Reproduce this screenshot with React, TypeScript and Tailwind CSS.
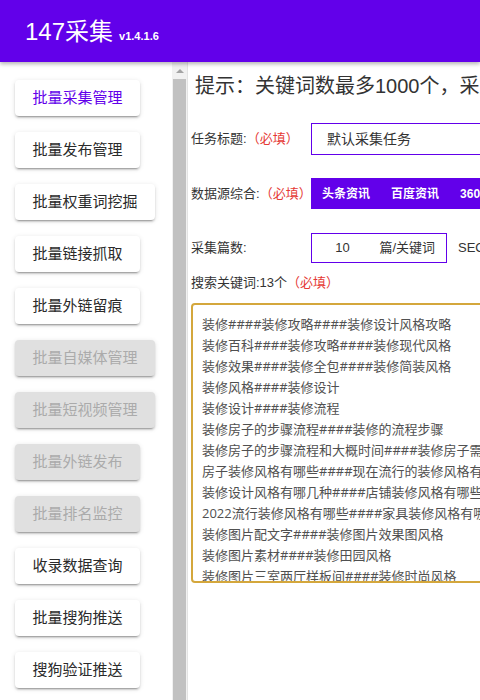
import React from "react";

const FONT = "font-['Liberation_Sans','Noto_Sans_CJK_SC',sans-serif]";

const RAISED =
  "shadow-[0_3px_1px_-2px_rgba(0,0,0,0.2),0_2px_2px_0_rgba(0,0,0,0.14),0_1px_5px_0_rgba(0,0,0,0.12)]";

interface NavItem {
  label: string;
  state: "active" | "normal" | "disabled";
}

const navItems: NavItem[] = [
  { label: "批量采集管理", state: "active" },
  { label: "批量发布管理", state: "normal" },
  { label: "批量权重词挖掘", state: "normal" },
  { label: "批量链接抓取", state: "normal" },
  { label: "批量外链留痕", state: "normal" },
  { label: "批量自媒体管理", state: "disabled" },
  { label: "批量短视频管理", state: "disabled" },
  { label: "批量外链发布", state: "disabled" },
  { label: "批量排名监控", state: "disabled" },
  { label: "收录数据查询", state: "normal" },
  { label: "批量搜狗推送", state: "normal" },
  { label: "搜狗验证推送", state: "normal" },
];

const keywords = [
  "装修####装修攻略####装修设计风格攻略",
  "装修百科####装修攻略####装修现代风格",
  "装修效果####装修全包####装修简装风格",
  "装修风格####装修设计",
  "装修设计####装修流程",
  "装修房子的步骤流程####装修的流程步骤",
  "装修房子的步骤流程和大概时间####装修房子需要注意什么",
  "房子装修风格有哪些####现在流行的装修风格有哪些",
  "装修设计风格有哪几种####店铺装修风格有哪些",
  "2022流行装修风格有哪些####家具装修风格有哪些",
  "装修图片配文字####装修图片效果图风格",
  "装修图片素材####装修田园风格",
  "装修图片三室两厅样板间####装修时尚风格",
];

const NavButton: React.FC<{ item: NavItem }> = ({ item }) => {
  const tone =
    item.state === "active"
      ? "bg-white text-[#6200ea]"
      : item.state === "disabled"
      ? "bg-[#e0e0e0] text-[#ababab]"
      : "bg-white text-[#2a2a2a]";
  return (
    <div
      className={`self-start h-[36px] px-[17.5px] flex items-center rounded-[4px] text-[15px] ${tone} ${RAISED}`}
    >
      {item.label}
    </div>
  );
};

const Required = () => <span className="text-[#e53935]">（必填）</span>;

export default function App() {
  return (
    <div className={`w-[480px] h-[700px] overflow-hidden flex flex-col bg-white ${FONT}`}>
      <header className="relative z-10 h-[62px] shrink-0 bg-[#6200ea] shadow-[0_2px_4px_rgba(0,0,0,0.3)] flex items-center pl-[25px] pt-[2px]">
        <div className="flex items-baseline text-white">
          <span className="text-[24px] leading-[30px]">147采集</span>
          <span className="ml-[6px] text-[11px] font-bold">v1.4.1.6</span>
        </div>
      </header>

      <div className="flex flex-1 min-h-0">
        <aside className="w-[172px] shrink-0 flex flex-col gap-4 pl-[15px] pt-[18px]">
          {navItems.map((item) => (
            <NavButton key={item.label} item={item} />
          ))}
        </aside>

        {/* scrollbar of the side menu */}
        <div className="w-[15px] shrink-0 bg-[#f1f1f1] flex flex-col">
          <div className="h-[17px] flex items-center justify-center">
            <div className="w-0 h-0 border-l-[4px] border-r-[4px] border-b-[4px] border-l-transparent border-r-transparent border-b-[#a3a3a3]" />
          </div>
          <div className="flex-1 mx-[1px] bg-[#c1c1c1]" />
        </div>
        <div className="w-[1px] shrink-0 bg-[#e3e3e3]" />

        <main className="flex-1 min-w-0 overflow-hidden pl-[3px] text-[#333]">
          <div className="w-[640px]">
            <div className="ml-[4px] mt-[11px] text-[20px] leading-[26px] whitespace-nowrap">
              提示：关键词数最多1000个，采集文章数最多10000篇
            </div>

            <div className="mt-[24px] flex items-center text-[13px]">
              <div className="w-[120px] whitespace-nowrap">
                任务标题:<Required />
              </div>
              <div className="w-[400px] h-[32px] border border-[#6200ea] flex items-center pl-[15px] text-[14px]">
                默认采集任务
              </div>
            </div>

            <div className="mt-[23px] flex items-center text-[13px]">
              <div className="w-[120px] whitespace-nowrap">
                数据源综合:<Required />
              </div>
              <div className="h-[31px] bg-[#6200ea] flex items-center px-[0.5px] text-[12px] font-bold text-white">
                {["头条资讯", "百度资讯", "360资讯", "搜狗资讯", "微信文章"].map((t) => (
                  <span key={t} className="px-[10.5px]">
                    {t}
                  </span>
                ))}
              </div>
            </div>

            <div className="mt-[24px] flex items-center text-[13px]">
              <div className="w-[120px] whitespace-nowrap">采集篇数:</div>
              <div className="w-[136px] h-[30px] border border-[#6200ea] flex items-center">
                <span className="w-[61px] text-center">10</span>
                <span className="ml-auto pr-[11px]">篇/关键词</span>
              </div>
              <span className="ml-[11px] whitespace-nowrap">SEO优化</span>
            </div>

            <div className="mt-[11px] text-[13px] leading-[18px] whitespace-nowrap">
              搜索关键词:13个<Required />
            </div>

            <div className="mt-[11px] w-[600px] h-[280px] border-2 border-[#d4a73c] rounded-[4px] overflow-hidden pt-[9px] pl-[9px] text-[13px] leading-[21px] text-[#505050] font-['Open_Sans','Noto_Sans_CJK_SC',sans-serif]">
              {keywords.map((k) => (
                <div key={k} className="whitespace-nowrap">
                  {k}
                </div>
              ))}
            </div>
          </div>
        </main>
      </div>
    </div>
  );
}
